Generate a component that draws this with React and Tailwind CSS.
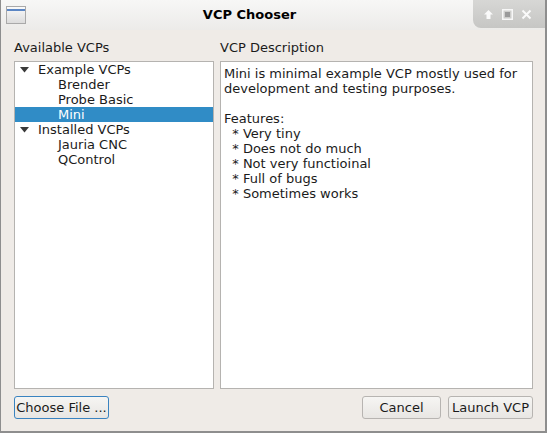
import React, { useState } from 'react';

const tree = [
	{ label: 'Example VCPs', children: ['Brender', 'Probe Basic', 'Mini'] },
	{ label: 'Installed VCPs', children: ['Jauria CNC', 'QControl'] },
];

const Arrow = () => (
	<svg width="9" height="6" viewBox="0 0 9 6" className="shrink-0">
		<path d="M0 0 L9 0 L4.5 5.5 Z" fill="#3a3a3a" />
	</svg>
);

const App = () => {
	const [selected, setSelected] = useState('Mini');

	return (
		<div className="w-[547px] h-[433px] flex flex-col bg-[#efebe7] border-l border-b-2 border-r-2 border-[#8e8e8e] text-[13px] text-[#1b1b1b] overflow-hidden" style={{ fontFamily: '"DejaVu Sans", sans-serif' }}>
			{/* title bar */}
			<div className="h-[30px] shrink-0 flex items-center relative bg-gradient-to-b from-[#f7f7f6] to-[#ecebe9]">
				<div className="ml-[5px] w-[20px] h-[18px] border border-[#a9a9a9] bg-gradient-to-b from-[#fafafa] to-[#dcdcdc] flex flex-col">
					<div className="h-[2px] bg-[#5b86c4] mt-[2px]"></div>
				</div>
				<div className="flex-1 text-center font-bold text-[13px] text-black">VCP Chooser</div>
				<div className="w-[72px] h-[28px] self-start rounded-bl-[8px] bg-gradient-to-b from-[#d7d7d5] to-[#c6c6c4] flex items-center gap-[8px] pl-[10px]">
					<svg width="11" height="11" viewBox="0 0 11 11">
						<path d="M5.5 1 L10 5.5 L7.5 5.5 L7.5 10 L3.5 10 L3.5 5.5 L1 5.5 Z" fill="#fafafa" />
					</svg>
					<svg width="11" height="11" viewBox="0 0 11 11">
						<rect x="0.75" y="0.75" width="9.5" height="9.5" fill="none" stroke="#f7f7f7" strokeWidth="1.5" />
						<rect x="3" y="3" width="5" height="5" fill="#9a9a9a" />
					</svg>
					<svg width="11" height="11" viewBox="0 0 11 11">
						<path d="M1.5 1.5 L9.5 9.5 M9.5 1.5 L1.5 9.5" stroke="#fafafa" strokeWidth="2" />
					</svg>
				</div>
			</div>

			{/* content */}
			<div className="flex-1 flex flex-col pl-[13px] pr-[12px] pt-[10px] pb-[12px]">
				<div className="flex-1 flex gap-[6px]">
					<div className="w-[200px] flex flex-col">
						<div className="h-[21px] leading-[15px]">Available VCPs</div>
						<div className="flex-1 bg-white border border-[#b5b3b0]">
							{tree.map((g) => (
								<div key={g.label}>
									<div className="h-[15px] flex items-center pl-[5px] gap-[9px]">
										<Arrow />
										<span>{g.label}</span>
									</div>
									{g.children.map((c) => (
										<div
											key={c}
											onClick={() => setSelected(c)}
											className={`h-[15px] leading-[15px] pl-[43px] ${selected === c ? 'bg-[#308cc6] text-white' : ''}`}
										>
											{c}
										</div>
									))}
								</div>
							))}
						</div>
					</div>
					<div className="flex-1 flex flex-col">
						<div className="h-[21px] leading-[15px]">VCP Description</div>
						<div className="flex-1 bg-white border border-[#b5b3b0] px-[3px] pt-[4px] leading-[15px]">
							<p>Mini is minimal example VCP mostly used for development and testing purposes.</p>
							<p className="mt-[15px]">Features:</p>
							<p>&nbsp;&nbsp;* Very tiny</p>
							<p>&nbsp;&nbsp;* Does not do much</p>
							<p>&nbsp;&nbsp;* Not very functioinal</p>
							<p>&nbsp;&nbsp;* Full of bugs</p>
							<p>&nbsp;&nbsp;* Sometimes works</p>
						</div>
					</div>
				</div>
				<div className="flex items-center gap-[7px] mt-[7px]">
					<button className="h-[23px] w-[95px] rounded-[3px] border border-[#3a83c0] bg-gradient-to-b from-[#f6f5f3] to-[#e8e6e3]">Choose File ...</button>
					<div className="flex-1"></div>
					<button className="h-[23px] w-[79px] rounded-[3px] border border-[#b7b4b1] bg-gradient-to-b from-[#f6f5f3] to-[#e8e6e3]">Cancel</button>
					<button className="h-[23px] w-[85px] rounded-[3px] border border-[#b7b4b1] bg-gradient-to-b from-[#f6f5f3] to-[#e8e6e3]">Launch VCP</button>
				</div>
			</div>
		</div>
	);
};

export default App;
